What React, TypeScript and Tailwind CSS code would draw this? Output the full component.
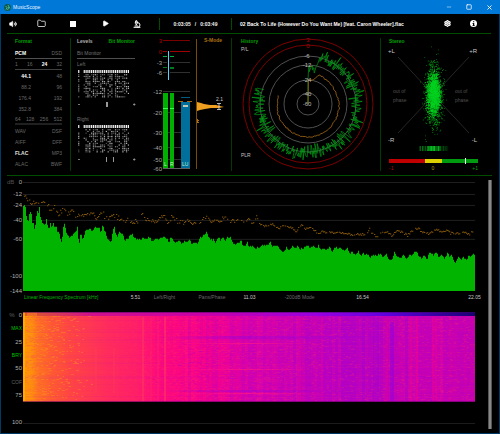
import React from "react";
import { Folder, Microscope, Minus, Play, Settings, Square, Volume2, X } from "lucide-react";

type Pt = [number, number];

function seeded(seed: number) {
  let s = seed;
  return () => {
    s = (s * 1664525 + 1013904223) % 4294967296;
    return s / 4294967296;
  };
}

function toPoints(list: string): Pt[] {
  return list
    .trim()
    .split(/\s+/)
    .map((p) => p.split(",").map(Number) as Pt);
}

function valueAt(pts: Pt[], x: number) {
  for (let i = 1; i < pts.length; i++) {
    if (x <= pts[i][0]) {
      const [x0, y0] = pts[i - 1];
      const [x1, y1] = pts[i];
      return y0 + ((y1 - y0) * (x - x0)) / (x1 - x0 || 1);
    }
  }
  return pts[pts.length - 1][1];
}

/* Chart data on a 1356 by 328 grid, measured down from 0 dB. */
const SPECTRUM = toPoints(`
0,82 2,65 6,67 9,90 12,117 16,115 20,90 24,92 28,120 32,122 35,152 38,120 42,82 45,98 49,75 52,105 57,120 62,128 66,133
70,110 74,135 78,145 82,120 86,142 90,120 95,140 100,135 104,155 108,150 112,170 116,184 119,155 122,125 126,130 129,150
134,162 140,168 146,160 154,156 159,150 163,135 166,170 169,184 173,150 178,174 183,162 188,145 194,142 200,140 206,148
212,142 218,132 224,140 228,130 231,155 235,145 239,128 244,148 249,155 254,175 260,178 265,178 269,150 273,132 277,150
282,168 287,150 294,154 300,160 305,180 310,170 317,168 323,157 328,158 333,168 336,165 341,174 352,172 362,170 372,168
380,166 388,178 397,170 407,175 417,168 424,166 432,170 438,185 443,165 450,175 458,185 467,175 477,186 485,177 492,180
500,175 507,188 515,182 524,185 532,165 540,163 545,158 551,150 557,165 564,175 572,173 578,182 586,165 592,177 599,167
607,175 616,165 624,170 630,185 637,190 642,178 648,185 654,178 660,190 667,192 672,180 677,195 682,195 688,192 697,200
707,198 717,190 727,190 737,187 742,178 747,192 757,192 767,195 774,208 782,210 790,198 800,205 808,195 817,200 824,192
832,202 842,198 852,192 862,198 872,192 880,200 886,192 894,205 904,200 914,202 920,196 927,210 935,196 944,200 954,198
964,208 972,198 978,215 987,210 997,220 1005,208 1014,222 1022,215 1032,218 1042,225 1052,220 1062,222 1072,216 1082,225
1090,218 1097,232 1105,235 1114,212 1122,225 1132,228 1142,218 1150,232 1160,220 1170,218 1178,206 1186,220 1195,230
1204,222 1212,232 1220,212 1230,220 1240,213 1248,226 1256,220 1265,230 1274,214 1280,228 1286,220 1292,238 1299,242
1306,224 1314,235 1322,226 1330,235 1337,220 1344,225 1350,216 1356,220`);

const PEAKS = toPoints(`
0,70 4,38 8,45 12,60 22,58 32,65 42,58 52,62 58,52 64,65 74,70 82,82 92,73 100,88 107,95 117,85 132,92 147,85 157,98 172,100
187,102 197,92 212,100 222,105 237,92 247,108 262,100 282,105 297,115 322,116 347,118 352,95 360,95 364,108 377,113 392,118
407,110 422,102 432,120 447,102 462,118 477,120 492,115 507,120 522,122 537,110 552,100 562,118 577,108 587,120 602,105
622,115 632,118 647,102 662,118 674,112 682,118 694,115 699,102 706,125 717,128 727,132 742,125 757,132 767,138 782,130
802,135 817,148 832,128 847,140 862,138 882,152 897,148 912,150 932,152 962,154 982,156 1012,156 1030,154 1037,138 1047,155
1060,164 1072,150 1087,148 1107,160 1117,145 1132,148 1152,160 1167,145 1182,138 1197,148 1217,157 1232,142 1257,148
1272,145 1282,153 1312,152 1322,150 1337,157 1347,148 1356,152`);

function spectrumPath() {
  const r = seeded(7);
  let d = "M0 328";
  for (let x = 0; x < 1356; x += 3) {
    const y = Math.round((valueAt(SPECTRUM, x + 1) + (r() - 0.5) * 5) / 3) * 3;
    d += `L${x} ${y}L${x + 3} ${y}`;
  }
  return d + "V328Z";
}

function peaksPath() {
  const r = seeded(21);
  let d = "";
  for (let x = 0; x < 1356; x += 3) {
    const spread = x < 330 ? 16 : x < 700 ? 13 : 7;
    const y = valueAt(PEAKS, x) + (r() - 0.5) * spread;
    if (r() > 0.2) d += `M${x} ${y.toFixed(1)}h4v3h-4z`;
  }
  return d;
}

const LEVEL_MARKS = [
  { y: 0, label: "0" },
  { y: 12, label: "-12" },
  { y: 23, label: "-24" },
  { y: 38, label: "-40" },
  { y: 57, label: "-60" },
  { y: 94, label: "-100" },
  { y: 109, label: "-144" },
];

function Toolbar() {
  const btn = "flex h-4 items-center justify-center text-white";
  return (
    <div className="mr-2 ml-1.5 border-b border-[#004d00]">
      <div className="-ml-1.5 flex h-[19px] items-center text-[5px] leading-[6px] font-bold">
        <button className={`${btn} w-6`} aria-label="Volume"><Volume2 size={8} fill="currentColor" strokeWidth={2} /></button>
        <button className={`${btn} w-8`} aria-label="Open folder"><Folder size={9} strokeWidth={2} /></button>
        <button className={`${btn} w-8`} aria-label="Stop"><span className="size-[6px] bg-white" /></button>
        <button className={`${btn} w-8`} aria-label="Play"><Play size={7} fill="currentColor" /></button>
        <button className={`${btn} w-8`} aria-label="Analyse"><Microscope size={8} strokeWidth={3} /></button>
        <span className="ml-1.5 h-3 w-px shrink-0 bg-[#004d00]" />
        <div className="flex w-[71px] shrink-0 justify-center gap-1 text-[#f0f0f0]">
          <span>0:03:05</span><span>/</span><span>0:03:49</span>
        </div>
        <span className="h-3 w-px shrink-0 bg-[#004d00]" />
        <h1 className="min-w-0 flex-1 truncate pl-2 text-white">
          02 Back To Life (However Do You Want Me) [feat. Caron Wheeler].flac
        </h1>
        <button className={`${btn} w-7`} aria-label="Settings"><Settings size={7} strokeWidth={4} /></button>
        <button className={`${btn} mr-1.5 w-6`} aria-label="Information">
          <svg viewBox="0 0 14 14" className="size-[7px]">
            <circle cx={7} cy={7} r={7} fill="#fff" />
            <path d="M6 2.500h2.500v2H6zM5 6h3.500v4.500h1V12H5v-1.500h1V7.500H5z" fill="#000" />
          </svg>
        </button>
      </div>
    </div>
  );
}

function FormatPanel() {
  const row = "flex h-[11px] items-center justify-between";
  const rates = [["44.1", "48"], ["88.2", "96"], ["176.4", "192"], ["352.8", "384"]];
  const files = [["WAV", "DSF"], ["AIFF", "DFF"], ["FLAC", "MP3"], ["ALAC", "BWF"]];
  return (
    <section className="my-1 border-r border-[#003c00]">
      <div className="-mt-1 mr-2 ml-2 pt-1 text-[#686868]">
        <h2 className="h-[10px] font-bold text-[#00a000]">Format</h2>
        <div className={`${row} border-b border-[#505050]`}><b className="text-white">PCM</b><span>DSD</span></div>
        <div className={`${row} border-b border-[#404040]`}>
          <span>1</span><span>16</span><b className="text-white">24</b><span>32</span>
        </div>
        {rates.map(([a, b]) => (
          <div key={a} className={row}>
            <span className={a === "44.1" ? "w-4 text-right font-bold text-white" : "w-4 text-right"}>{a}</span>
            <span>{b}</span>
          </div>
        ))}
        <div className={`${row} border-b-2 border-[#202020]`}>
          <span>64</span><span>128</span><span>256</span><span>512</span>
        </div>
        {files.map(([a, b]) => (
          <div key={a} className={row}>
            <span className={a === "FLAC" ? "font-bold text-[#e0e0e0]" : ""}>{a}</span>
            <span>{b}</span>
          </div>
        ))}
      </div>
    </section>
  );
}

function BitGrid({ seed, marks }: { seed: number; marks: number[] }) {
  const r = seeded(seed);
  const cells: React.ReactNode[] = [];
  for (let c = -4; c < 24; c++) {
    if (c === -3 || c === -2) continue;
    for (let i = 0; i < 15; i++) {
      const top = i === 0;
      const chance = top ? (c < 0 ? (c === -4 ? 1 : 0.3) : 1) : c === -4 ? 0.7 : c < 0 ? 0.2 : c % 4 === 3 ? 0.3 : 0.68;
      if (r() > chance) continue;
      cells.push(
        <rect key={`${c}.${i}`} x={8.5 + c * 1.84} y={top ? 0 : 2.5 + i * 1.7} width={1.2} height={top ? 3 : 1.1}
          fill="#fff" opacity={top ? 0.95 : 0.3 + r() * 0.5} />,
      );
    }
  }
  return (
    <svg viewBox="0 0 60 40" className="block h-10 w-[60px]">
      {cells}
      <path d="M1 34.500h2M56 34.500h2.500M57.250 33.250v2.500" stroke="#aaa" strokeWidth={0.7} />
      {marks.map((x) => <rect key={x} x={x} y={32} width={1} height={5} fill="#999" />)}
    </svg>
  );
}

function LevelsPanel() {
  return (
    <section className="pt-1 pl-1.5 text-[#707070]">
      <div className="w-[58px]">
        <div className="flex h-3 items-start justify-between font-bold">
          <button className="text-[#b0b0b0]">Levels</button>
          <button className="text-[#00a000]">Bit Monitor</button>
        </div>
        <p className="h-[9px] border-b border-[#505050]">Bit Monitor</p>
        <h3 className="mt-[2px] h-[9px]">Left</h3>
      </div>
      <BitGrid seed={11} marks={[29, 30]} />
      <h3 className="mt-[6px] h-[9px]">Right</h3>
      <BitGrid seed={95} marks={[29, 36]} />
    </section>
  );
}

function MeterPanel() {
  const marks: [number, string, string][] = [
    [6, "3", "#7a0000"], [17, "0", "#a00000"], [28, "-3", "#303030"], [38, "-6", "#303030"], [57, "-12", "#303030"],
    [78, "-20", "#303030"], [98, "-30", "#303030"], [113, "-40", "#303030"], [125, "-50", "#303030"], [134, "-60", "#606060"],
  ];
  return (
    <section className="my-1 border-r border-[#003c00]">
      <svg viewBox="0 4 83 133" className="block h-[133px] w-full" fontSize={6}>
        {marks.map(([y, t, c], i) => (
          <g key={t}>
            <rect x={15} y={y} width={27} height={1} fill={c} />
            <text x={14} y={y + 3} textAnchor="end" fill={i < 2 ? "#b00000" : "#a8a8a8"}>{t}</text>
          </g>
        ))}
        <path d="M15 59h5v75h-5zM22 59h4v75h-4z" fill="#00b000" />
        <path d="M15 74h5v1h-5zM22 74h4v1h-4z" fill="#30ff50" />
        <path d="M15 22h4v1h-4zM22 22h4v1h-4z" fill="#00b040" />
        <path d="M15 33h4v1h-4zM22 33h4v2h-4z" fill="#007a20" />
        <rect x={19} y={16} width={3} height={31} fill="#000" />
        <rect x={20} y={17} width={1} height={29} fill="#5cd0ff" />
        <rect x={33} y={68} width={9} height={66} fill="#006f9c" />
        <rect x={33} y={63} width={9} height={1} fill="#005d80" />
        <path d="M30 67h5v1h-5zM39 67h5v1h-5z" fill="#a86810" />
        <rect x={35} y={71} width={5} height={2} fill="#c0c8b8" />
        <g fill="#c8f0c8" fontSize={5}>
          <text x={16} y={132}>L</text><text x={22} y={132}>R</text><text x={34} y={132}>LU</text>
        </g>
        <rect x={48} y={5} width={1} height={130} fill="#7a4c08" />
        <path d="M49 68L53 69L56 70L62 71L68 71L72 72L76 73L70 74L63 74L57 75L52 76L49 77Z" fill="#f0a020" />
        <path d="M49 85h1v4h-1zM50 86h1v1h-1zM50 88h1v1h-1z" fill="#b07018" />
        <path d="M69 69.500h4M71 69.500v6M69 75.500h4" stroke="#ddd" strokeWidth={0.8} />
        <text x={68} y={67} fill="#c8c8c8" fontSize={5}>2.1</text>
        <text x={56} y={8} fill="#b07010" fontSize={5} fontWeight="bold">S-Mode</text>
      </svg>
    </section>
  );
}

function HistoryPanel() {
  const r = seeded(5);
  const cx = 76;
  const cy = 70;
  const at = (deg: number, rad: number) => {
    const a = (deg * Math.PI) / 180;
    return `${(cx + rad * Math.sin(a)).toFixed(1)} ${(cy - rad * Math.cos(a)).toFixed(1)}`;
  };
  let green = `M${cx} ${cy}V45`;
  for (let d = 1; d < 288; d += 0.7) {
    const base = d < 10 ? 36 : d < 15 ? 32 + (d - 10) * 3.5 : 49;
    green += `L${at(d, base + (r() + r() + r() - 1.5) * (d < 15 ? 5 : 8))}`;
  }
  const orangeBase: Pt[] = [[1, 24], [10, 24], [15, 27], [22, 31], [40, 30], [60, 30], [90, 31], [130, 32], [180, 33], [225, 32], [270, 31], [288, 31]];
  let orange = `M${cx} ${cy}`;
  for (let d = 1; d <= 288; d += 3) orange += `L${at(d, valueAt(orangeBase, d) + (r() - 0.5) * 1.4)}`;
  const labels: [number, string, string][] = [
    [6, "3", "#b00000"], [12, "0", "#b00000"], [22, "-6", "#bbb"], [31, "-12", "#bbb"], [46, "-24", "#bbb"], [60, "-40", "#bbb"], [70, "-60", "#bbb"],
  ];
  return (
    <section className="my-1 border-r border-[#003c00]">
      <svg viewBox="0 4 148 133" className="block h-[133px] w-full" fontSize={5}>
        <g fill="none">
          <circle cx={cx} cy={cy} r={65} stroke="#7c0000" />
          <circle cx={cx} cy={cy} r={59} stroke="#7c0000" />
          {[48, 39, 24, 11].map((rad) => <circle key={rad} cx={cx} cy={cy} r={rad} stroke="#505050" />)}
          <path d={green} stroke="#009c14" strokeWidth={0.7} />
          <path d={orange} stroke="#a86c14" strokeWidth={0.8} />
        </g>
        {labels.map(([y, t, c]) => (
          <text key={t} x={t.length > 1 ? 75 : 76} y={y + 2} textAnchor="middle" fill={c} fontSize={6}>{t}</text>
        ))}
        <text x={9} y={9} fill="#00a000" fontWeight="bold">History</text>
        <text x={9} y={17} fill="#c0c0c0">P/L</text>
        <text x={9} y={123} fill="#c0c0c0">PLR</text>
      </svg>
    </section>
  );
}

function StereoPanel() {
  const r = seeded(33);
  const gauss = () => r() + r() + r() + r() - 2;
  let dim = "";
  let bright = "";
  for (let i = 0; i < 2800; i++) {
    const tight = i % 3 !== 0;
    const x = 52.5 + gauss() * (tight ? 5.5 : 7.5);
    const y = 60 + gauss() * (tight ? 17 : 29);
    const dot = `M${x.toFixed(1)} ${y.toFixed(1)}h.8v.8h-.8z`;
    if (tight) bright += dot;
    else dim += dot;
  }
  const strip: React.ReactNode[] = [];
  for (let x = 38; x < 68; x++) {
    const core = x > 45 && x < 59;
    strip.push(<rect key={x} x={x} y={112} width={1} height={5} fill="#00c020" opacity={core ? 0.5 + r() * 0.5 : x < 63 ? r() * 0.7 : r() * 0.25} />);
  }
  return (
    <section className="my-1">
      <svg viewBox="0 4 111 133" className="block h-[133px] w-full" fontSize={5}>
        <path d="M17 23L88 99M88 23L17 99" stroke="#303030" strokeWidth={0.8} />
        <path d={dim} fill="#009010" />
        <path d={bright} fill="#00e020" opacity={0.85} />
        <text x={8} y={9} fill="#00a000" fontWeight="bold">Stereo</text>
        <g fill="#c8c8c8" fontSize={6}>
          <text x={7} y={19}>+L</text><text x={96} y={19} textAnchor="end">+R</text>
          <text x={7} y={108}>-R</text><text x={96} y={108} textAnchor="end">-L</text>
        </g>
        <g fill="#505050" fontSize={5}>
          <text x={12} y={59}>out of</text><text x={12} y={68}>phase</text>
          <text x={74} y={59}>out of</text><text x={74} y={68}>phase</text>
        </g>
        {strip}
        <rect x={8} y={125} width={36} height={4} fill="#c00000" />
        <rect x={44} y={125} width={17} height={4} fill="#dcd000" />
        <rect x={61} y={125} width={36} height={4} fill="#009a10" />
        <rect x={84} y={124} width={1} height={6} fill="#e8ffe8" />
        <text x={8} y={136} fill="#c00000">-1</text>
        <text x={52} y={136} textAnchor="middle" fill="#b0a000">0</text>
        <text x={97} y={136} textAnchor="end" fill="#00a000">+1</text>
      </svg>
    </section>
  );
}

function SpectrumChart() {
  return (
    <section className="pt-1">
      <div className="flex">
        <svg viewBox="0 0 22 114" className="h-[114px] w-[22px] shrink-0" fontSize={6}>
          <text x={6} y={4} fill="#505050">dB</text>
          {LEVEL_MARKS.map((m) => (
            <text key={m.label} x={21} y={m.y + 4} textAnchor="end" fill="#b0b0b0">{m.label}</text>
          ))}
        </svg>
        <svg viewBox="0 0 1356 328" preserveAspectRatio="none" className="mt-[2px] mr-[13px] h-[109px] min-w-0 flex-1">
          {LEVEL_MARKS.slice(0, 5).map((m) => <rect key={m.label} x={0} y={m.y * 3} width={1356} height={3} fill="#202020" />)}
          <path d={peaksPath()} fill="#805408" />
          <path d={spectrumPath()} fill="#00b400" />
        </svg>
      </div>
      <div className="mr-px ml-[23px] grid grid-cols-[105fr_13fr_45fr_50fr_25fr_75fr_51fr_74fr_25fr] items-center text-center whitespace-nowrap text-[#686868]">
        <button className="text-left text-[#00b400]">Linear Frequency Spectrum [kHz]</button>
        <span className="text-[#c8c8c8]">5.51</span>
        <button>Left/Right</button>
        <button>Pans/Phase</button>
        <span className="text-[#c8c8c8]">11.03</span>
        <button>-200dB Mode</button>
        <span className="text-[#c8c8c8]">16.54</span>
        <span />
        <span className="text-[#c8c8c8]">22.05</span>
      </div>
    </section>
  );
}

const HEAT: [number, string][] = [
  [0, "#ffa000"], [2, "#ff9408"], [3, "#ff7c18"], [6, "#ff6428"], [11, "#ff4840"], [18, "#ff3058"], [25, "#ff2066"], [30, "#ff0c78"],
  [38, "#fa0486"], [44, "#ee0096"], [50, "#d800ac"], [58, "#cc00b4"], [68, "#bc00c0"], [75, "#b400c4"], [82, "#c400b8"],
  [92, "#cc00b0"], [100, "#c800b0"],
];

function Spectrogram() {
  const r = seeded(77);
  const bars: React.ReactNode[] = [];
  for (let x = 0; x < 452; x += 3) {
    const cool = r() > 0.5 && x > 130;
    bars.push(<rect key={`c${x}`} x={x} y={5} width={3} height={85} fill={cool ? "#9800dc" : "#ff1888"} opacity={r() * (x > 160 ? 0.17 : 0.06)} />);
  }
  for (let y = 4; y < 90; y += 1) {
    const warm = r() > 0.5;
    bars.push(<rect key={`r${y}`} x={0} y={y} width={452} height={1} fill={warm ? "#ff1880" : "#c000c0"} opacity={r() * 0.11} />);
  }
  const speck = ["", "", ""];
  for (let i = 0; i < 4200; i++) {
    const x = Math.floor(r() * 452);
    const y = 4 + Math.floor(r() * 85);
    const k = x < 30 + r() * 40 ? (r() > 0.5 ? 0 : 1) : x < 120 + r() * 100 || r() > 0.5 ? 1 : 2;
    speck[k] += `M${x} ${y}h${1 + Math.floor(r() * 4)}v1h-2z`;
  }
  const streaks: [number, number, string][] = [
    [72, 0.12, "#ff6040"], [90, 0.12, "#ff6040"], [119, 0.35, "#ff4858"], [127, 0.12, "#ff4858"], [134, 0.15, "#ff4858"],
    [141, 0.4, "#ff4858"], [276, 0.3, "#ff0088"], [298, 0.25, "#ff0088"], [363, 0.25, "#ff0088"], [387, 0.3, "#ff0088"],
    [393, 0.45, "#ff0088"], [409, 0.4, "#ff0088"], [412, 0.3, "#ff0088"],
  ];
  return (
    <svg viewBox="0 0 452 90" preserveAspectRatio="none" className="block h-[90px] w-full">
      <defs>
        <linearGradient id="heat">{HEAT.map(([o, c]) => <stop key={o} offset={`${o}%`} stopColor={c} />)}</linearGradient>
        <linearGradient id="lead">
          <stop offset="0%" stopColor="#e06020" /><stop offset="15%" stopColor="#d0108c" /><stop offset="40%" stopColor="#c800a8" />
          <stop offset="65%" stopColor="#9800e0" /><stop offset="80%" stopColor="#6000e0" /><stop offset="100%" stopColor="#180070" />
        </linearGradient>
        <linearGradient id="cool">
          <stop offset="30%" stopColor="#9400e0" stopOpacity={0} /><stop offset="48%" stopColor="#9400e0" stopOpacity={0.45} />
          <stop offset="85%" stopColor="#9400e0" stopOpacity={0} />
        </linearGradient>
        <linearGradient id="warm">
          <stop offset="30%" stopColor="#ff1880" stopOpacity={0} /><stop offset="50%" stopColor="#ff1880" stopOpacity={0.7} />
          <stop offset="66%" stopColor="#ff1880" stopOpacity={0} />
        </linearGradient>
      </defs>
      <rect width={452} height={90} fill="url(#heat)" />
      {bars}
      <path d={speck[0]} fill="#ff9c20" opacity={0.4} />
      <path d={speck[1]} fill="#ff3860" opacity={0.2} />
      <path d={speck[2]} fill="#9000d8" opacity={0.2} />
      {streaks.map(([x, o, c]) => <rect key={x} x={x} y={x < 100 ? 36 : 5} width={2} height={x < 100 ? 45 : 84} fill={c} opacity={o} />)}
      <rect x={367} y={10} width={4} height={79} fill="#8000e8" opacity={0.4} />
      <rect x={350} y={5} width={6} height={84} fill="#8000e8" opacity={0.25} />
      <rect x={382} y={5} width={3} height={84} fill="#8000e8" opacity={0.25} />
      <rect y={24} width={452} height={3} fill="url(#cool)" />
      <rect y={78} width={452} height={2} fill="url(#cool)" />
      {[31, 57, 81].map((y) => <rect key={y} y={y} width={452} height={1} fill="url(#warm)" />)}
      <rect width={452} height={4} fill="url(#lead)" />
      <rect x={4} y={0} width={10} height={4} fill="#ff8020" opacity={0.5} />
      <rect width={2} height={90} fill="#ffb400" opacity={0.7} />
      <rect y={89} width={452} height={1} fill="#600060" opacity={0.6} />
      <rect width={452} height={1} fill="#400060" opacity={0.5} />
    </svg>
  );
}

function HeatMapSection() {
  return (
    <section className="mt-[12px] flex flex-1 flex-col">
      <div className="flex">
        <div className="flex h-[86px] w-[22px] shrink-0 flex-col items-end justify-between pr-px text-[6px] text-[#b0b0b0]">
          <span className="flex gap-1"><span className="text-[#606060]">%</span>0</span>
          <button className="text-[5px] text-[#00c000]">MAX</button>
          <span>25</span>
          <button className="text-[5px] text-[#00c000]">BRY</button>
          <span>50</span>
          <button className="text-[5px] text-[#606060]">COF</button>
          <span>75</span>
        </div>
        <div className="mr-[13px] min-w-0 flex-1"><Spectrogram /></div>
      </div>
      <div className="mt-auto mb-2 flex items-center">
        <span className="w-[22px] shrink-0 pr-px text-right text-[6px] text-[#b0b0b0]">100</span>
        <span className="mt-[2px] mr-[13px] h-px flex-1 bg-[#1c1c1c]" />
      </div>
    </section>
  );
}

export default function App() {
  return (
    <div className="flex min-h-screen flex-col bg-black font-['Liberation_Sans',Arial,sans-serif] text-[5px] leading-[6px] text-white">
      <header className="flex h-[14px] items-center bg-[#0078d7]">
        <svg viewBox="0 0 14 14" className="ml-1 size-[7px]">
          <circle cx={7} cy={7} r={7} fill="#0d5a50" />
          <path d="M3 4l3 3-2 4M8 2l2 4-3 6M10 6l2 3" stroke="#5ed0a0" strokeWidth={1.5} fill="none" />
        </svg>
        <span className="ml-0.5 flex-1 text-[#e4f2ff]">MusicScope</span>
        <button className="flex w-5 justify-center" aria-label="Minimise"><Minus size={6} /></button>
        <button className="flex w-5 justify-center" aria-label="Maximise"><Square size={6} strokeWidth={3} /></button>
        <button className="mr-px flex w-5 justify-center" aria-label="Close"><X size={7} strokeWidth={3} /></button>
      </header>
      <div className="flex flex-1 flex-col border-x border-b border-[#003a66]">
        <Toolbar />
        <div className="mr-[7px] ml-1.5 grid grid-cols-[64fr_77fr_84fr_149fr_111fr] border-b border-[#004d00]">
          <FormatPanel />
          <LevelsPanel />
          <MeterPanel />
          <HistoryPanel />
          <StereoPanel />
        </div>
        <main className="flex flex-1">
          <div className="flex min-w-0 flex-1 flex-col">
            <SpectrumChart />
            <HeatMapSection />
          </div>
          <div className="mt-1 mr-[7px] mb-1 w-1 border-x border-[#555] bg-[#888]" />
        </main>
      </div>
    </div>
  );
}
